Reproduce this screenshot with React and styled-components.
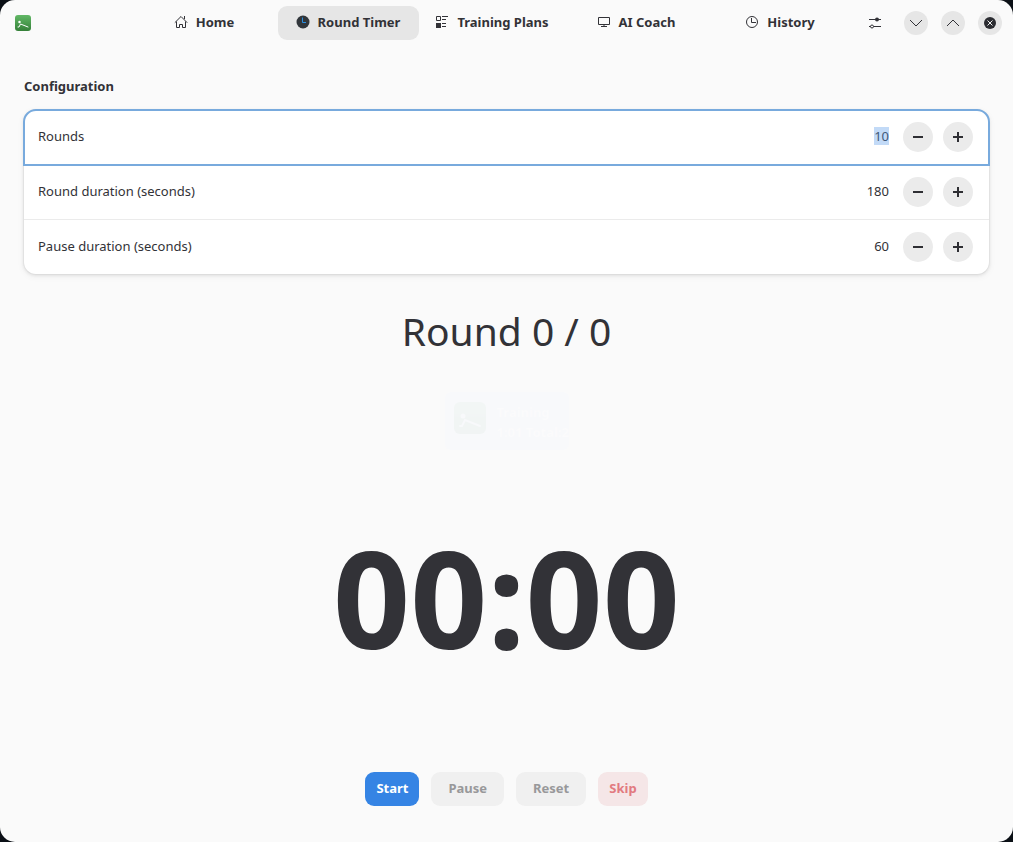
import React, { useEffect, useRef, useState } from 'react'
import styled, { createGlobalStyle, css } from 'styled-components'

const GlobalStyle = createGlobalStyle`
  * {
    box-sizing: border-box;
  }
  body {
    margin: 0;
    background: #0b1016;
    color: #323237;
    font-family: 'Noto Sans', sans-serif;
    font-size: 13px;
    line-height: 18px;
  }
  button, input {
    font: inherit;
    color: inherit;
    border: 0;
    padding: 0;
    background: none;
  }
`

const HomeIcon = () => (
  <svg width="16" height="16" viewBox="0 0 16 16" fill="none" stroke="currentColor">
    <path d="M1.800 8.700 8 2.500l6.200 6.200M3.500 7.500v6h3v-3h3v3h3v-6M11.500 2v3" />
  </svg>
)

const TimerIcon = () => (
  <svg width="16" height="16" viewBox="0 0 16 16" fill="none">
    <circle cx="8" cy="8" r="6.500" fill="#31363b" />
    <path d="M7.500 3.500v5H11" stroke="#2b8fe0" />
  </svg>
)

const PlansIcon = () => (
  <svg width="16" height="16" viewBox="0 0 16 16" fill="none" stroke="currentColor">
    <path d="M2.500 2.500h4v4h-4zM8 2.500h6M8 5.500h4M8 9.500h4M8 12.500h4" />
    <path d="M2 9h5v5H2z" fill="currentColor" stroke="none" />
  </svg>
)

const CoachIcon = () => (
  <svg width="16" height="16" viewBox="0 0 16 16" fill="none" stroke="currentColor">
    <path d="M2.500 3.500h11v7h-11zM5 12.500h6M8 11v1.500" />
  </svg>
)

const HistoryIcon = () => (
  <svg width="16" height="16" viewBox="0 0 16 16" fill="none" stroke="currentColor">
    <circle cx="8" cy="8" r="5.500" />
    <path d="M7.500 4v4.500H12" />
  </svg>
)

const SettingsIcon = () => (
  <svg width="16" height="16" viewBox="0 0 16 16" fill="none" stroke="currentColor">
    <path d="M2 4.500h12M2 11.500h1.500M6.500 11.500H14" />
    <circle cx="10" cy="4.500" r="2" fill="currentColor" stroke="none" />
    <circle cx="5" cy="11.500" r="1.500" />
  </svg>
)

const Chevron = ({ up }) => (
  <svg width="16" height="16" viewBox="0 0 16 16" fill="none" stroke="currentColor">
    <path d={up ? 'M2 11 8 5l6 6' : 'M2 5l6 6 6-6'} />
  </svg>
)

const CloseIcon = () => (
  <svg width="16" height="16" viewBox="0 0 16 16" fill="none">
    <circle cx="8" cy="8" r="6" fill="#2b2c31" />
    <path d="M5.500 5.500l5 5M10.500 5.500l-5 5" stroke="#f0f0f0" />
  </svg>
)

const SignIcon = ({ plus }) => (
  <svg width="16" height="16" viewBox="0 0 16 16" fill="none" stroke="#2e2e33" strokeWidth="2">
    <path d={plus ? 'M3 8h10M8 3v10' : 'M3 8h10'} />
  </svg>
)

const AppLogo = ({ size }) => (
  <svg width={size} height={size} viewBox="0 0 32 32" fill="none">
    <defs>
      <linearGradient id="logo" x1="0" y1="0" x2="0" y2="1">
        <stop offset="0" stopColor="#62b866" />
        <stop offset="1" stopColor="#348038" />
      </linearGradient>
    </defs>
    <rect width="32" height="32" rx="6" fill="url(#logo)" />
    <path d="M6 24h2l3-6 15 6" stroke="#fff" strokeWidth="2" strokeLinecap="round" />
    <circle cx="9" cy="14" r="2.500" fill="#fff" />
  </svg>
)

const tabs = [
  { name: 'Home', icon: <HomeIcon /> },
  { name: 'Round Timer', icon: <TimerIcon /> },
  { name: 'Training Plans', icon: <PlansIcon /> },
  { name: 'AI Coach', icon: <CoachIcon /> },
  { name: 'History', icon: <HistoryIcon /> },
]

const fields = [
  { id: 'rounds', label: 'Rounds', start: 10, step: 1 },
  { id: 'round-duration', label: 'Round duration (seconds)', start: 180, step: 5 },
  { id: 'pause-duration', label: 'Pause duration (seconds)', start: 60, step: 5 },
]

const SpinRow = ({ field, autoSelect }) => {

  const [value, setValue] = useState(field.start)
  const input = useRef(null)

  useEffect(() => {
    if (autoSelect) {
      input.current.focus()
      input.current.select()
    }
  }, [autoSelect])

  return (
    <Row>
      <label htmlFor={field.id}>{field.label}</label>
      <SpinInput
        id={field.id}
        ref={input}
        inputMode="numeric"
        value={value}
        onChange={e => setValue(Number(e.target.value) || 0)}
      />
      <RoundButton aria-label={`Decrease ${field.label}`} onClick={() => setValue(Math.max(0, value - field.step))}>
        <SignIcon />
      </RoundButton>
      <RoundButton aria-label={`Increase ${field.label}`} onClick={() => setValue(value + field.step)}>
        <SignIcon plus />
      </RoundButton>
    </Row>
  )
}

const App = () => {

  const [current, setCurrent] = useState('Round Timer')

  return (
    <Window>
      <GlobalStyle />
      <Header>
        <AppLogo size={16} />
        <Switcher>
          {tabs.map(tab => (
            <Tab key={tab.name} $active={tab.name === current} onClick={() => setCurrent(tab.name)}>
              {tab.icon}
              {tab.name}
            </Tab>
          ))}
        </Switcher>
        <SettingsButton aria-label="Settings"><SettingsIcon /></SettingsButton>
        <Controls>
          <WindowButton aria-label="Minimize"><Chevron /></WindowButton>
          <WindowButton aria-label="Maximize"><Chevron up /></WindowButton>
          <WindowButton aria-label="Close"><CloseIcon /></WindowButton>
        </Controls>
      </Header>

      <Main>
        <h2>Configuration</h2>
        <Card>
          {fields.map((field, i) => <SpinRow key={field.id} field={field} autoSelect={i === 0} />)}
        </Card>

        <RoundLabel>Round 0 / 0</RoundLabel>
        <Badge aria-hidden="true">
          <AppLogo size={32} />
          <div>Training<br />1:01 Total:2</div>
        </Badge>
        <Clock>00:00</Clock>

        <Actions>
          <Action $kind="suggested">Start</Action>
          <Action disabled>Pause</Action>
          <Action disabled>Reset</Action>
          <Action $kind="destructive" disabled>Skip</Action>
        </Actions>
      </Main>
    </Window>
  )
}

const Window = styled.div`
  display: flex;
  flex-direction: column;
  min-height: 100vh;
  border-radius: 15px;
  background: #fafafa;
`

const Header = styled.header`
  display: flex;
  align-items: center;
  padding: 0 11px 0 15px;
  height: 46px;
`

const Switcher = styled.nav`
  display: grid;
  grid-template-columns: repeat(5, minmax(0, 141px));
  gap: 3px;
  flex: 1;
  justify-content: end;
  margin-right: 7px;
`

const Tab = styled.button`
  display: flex;
  align-items: center;
  justify-content: center;
  gap: 7px;
  height: 34px;
  padding: 0 2px 2px 0;
  border-radius: 9px;
  font-weight: bold;
  white-space: nowrap;
  background: ${props => props.$active ? '#e6e6e6' : 'transparent'};
`

const SettingsButton = styled.button`
  display: grid;
  place-items: center;
  width: 34px;
  height: 34px;
`

const Controls = styled.div`
  display: flex;
  gap: 13px;
  margin-left: 12px;
`

const WindowButton = styled.button`
  display: grid;
  place-items: center;
  width: 24px;
  height: 24px;
  border-radius: 50%;
  background: #e6e6e6;
`

const Main = styled.main`
  display: flex;
  flex-direction: column;
  flex: 1;
  padding: 31px 24px 36px;

  h2 {
    margin: 0 0 15px;
    font-size: 13px;
    line-height: 18px;
    font-weight: bold;
  }
`

const Card = styled.section`
  border-radius: 12px;
  background: #fff;
  box-shadow: 0 0 0 1px rgba(0, 0, 6, .03), 0 1px 3px 1px rgba(0, 0, 6, .07), 0 2px 6px 2px rgba(0, 0, 6, .03);
`

const Row = styled.div`
  display: flex;
  align-items: center;
  height: 55px;
  padding: 0 16px 0 14px;
  border-bottom: 1px solid #ebebeb;

  &:first-child {
    border-radius: 12px 12px 0 0;
  }
  &:last-child {
    height: 54px;
    border-bottom: 0;
    border-radius: 0 0 12px 12px;
  }
  &:focus-within {
    outline: 2px solid #78aadd;
    outline-offset: -1px;
  }
  label {
    padding-bottom: 2px;
  }
`

const SpinInput = styled.input`
  flex: 1;
  min-width: 0;
  margin-right: 4px;
  padding-bottom: 2px;
  text-align: right;
  outline: none;

  &::selection {
    background: #c2daf7;
    color: #3f5878;
  }
`

const RoundButton = styled.button`
  display: grid;
  place-items: center;
  width: 30px;
  height: 30px;
  margin-left: 10px;
  border-radius: 50%;
  background: #ebebeb;
`

const RoundLabel = styled.div`
  margin-top: 29px;
  font-size: 39px;
  line-height: 56px;
  text-align: center;
`

const Badge = styled.div`
  display: flex;
  align-self: center;
  gap: 11px;
  width: 124px;
  height: 58px;
  margin-top: 33px;
  padding: 10px 0 0 9px;
  border-radius: 6px;
  background: #f8f9fb;
  color: #fbfbfc;
  font-weight: bold;
  line-height: 20px;
  white-space: nowrap;

  svg {
    flex: none;
    opacity: .03;
  }
`

const Clock = styled.div`
  flex: 1;
  display: grid;
  place-items: center;
  padding-bottom: 28px;
  font-size: 135px;
  line-height: 184px;
  font-weight: bold;
`

const Actions = styled.div`
  display: flex;
  justify-content: center;
  gap: 12px;
`

const Action = styled.button`
  height: 34px;
  padding: 0 17px 2px;
  border-radius: 9px;
  font-weight: bold;
  background: #f0f0f0;
  color: #98989a;

  ${props => props.$kind && css`
    padding: 0 11px 2px;
    background: ${props.$kind === 'suggested' ? '#3584e4' : '#f5e6e7'};
    color: ${props.$kind === 'suggested' ? '#fff' : '#e27a80'};
  `}
`

export default App
